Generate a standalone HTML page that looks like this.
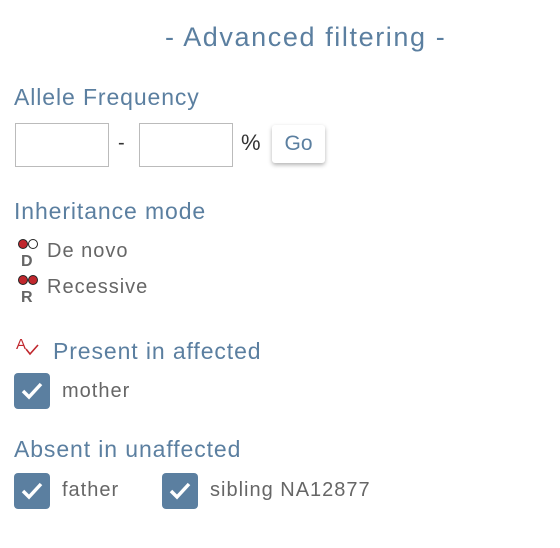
<!DOCTYPE html>
<html><head><style>
body{margin:0;width:560px;height:548px;background:#fff;font-family:"Liberation Sans",sans-serif;position:relative;overflow:hidden}
.a{position:absolute;white-space:nowrap}
.h{color:#5b7fa0;font-size:23px;letter-spacing:0.9px}
.t{color:#666;font-size:20px;letter-spacing:1px}
.in{position:absolute;border:1px solid #bbb;width:92px;height:42px;top:123px;background:#fff}
.cb{position:absolute;width:36px;height:36px;background:#5b7fa0;border-radius:4px}
.cb svg{position:absolute;left:6px;top:7px}
.ic{position:absolute;width:20px}
.dot{display:inline-block;width:10px;height:10px;border-radius:50%;background:#c0272d;border:1px solid #222;box-sizing:border-box}
</style></head><body>
<div class="a h" style="left:165px;top:22px;font-size:27px;letter-spacing:1.6px">- Advanced filtering -</div>
<div class="a h" style="left:14px;top:84px">Allele Frequency</div>
<div class="in" style="left:15px"></div>
<div class="a t" style="left:118px;top:132px;color:#333">-</div>
<div class="in" style="left:139px"></div>
<div class="a t" style="left:241px;top:130px;color:#333;font-size:22px">%</div>
<div class="a" style="left:272px;top:125px;width:53px;height:38px;border-radius:3px;box-shadow:0 2px 4px rgba(0,0,0,.3);color:#5b7fa0;font-size:21px;text-align:center;line-height:38px">Go</div>
<div class="a h" style="left:14px;top:198px">Inheritance mode</div>
<div class="ic" style="left:18px;top:236px"><span class="dot"></span><span class="dot" style="background:#fff"></span><div style="font-weight:bold;color:#666;font-size:16px;margin-left:3px;line-height:16px">D</div></div>
<div class="a t" style="left:47px;top:240px">De novo</div>
<div class="ic" style="left:18px;top:272px"><span class="dot"></span><span class="dot"></span><div style="font-weight:bold;color:#666;font-size:16px;margin-left:3px;line-height:16px">R</div></div>
<div class="a t" style="left:47px;top:276px">Recessive</div>
<svg class="a" style="left:16px;top:336px" width="26" height="22"><text x="0" y="13" font-size="15" fill="#c0272d" font-family="Liberation Sans">A</text><path d="M10 13 L14 18 L22 9" stroke="#c0272d" stroke-width="1.6" fill="none"/></svg>
<div class="a h" style="left:53px;top:338px">Present in affected</div>
<div class="cb" style="left:14px;top:373px"><svg width="24" height="22"><path d="M3 11 L9 17 L21 4" stroke="#fff" stroke-width="3.5" fill="none"/></svg></div>
<div class="a t" style="left:62px;top:380px">mother</div>
<div class="a h" style="left:14px;top:436px">Absent in unaffected</div>
<div class="cb" style="left:14px;top:473px"><svg width="24" height="22"><path d="M3 11 L9 17 L21 4" stroke="#fff" stroke-width="3.5" fill="none"/></svg></div>
<div class="a t" style="left:62px;top:479px">father</div>
<div class="cb" style="left:162px;top:473px"><svg width="24" height="22"><path d="M3 11 L9 17 L21 4" stroke="#fff" stroke-width="3.5" fill="none"/></svg></div>
<div class="a t" style="left:210px;top:479px">sibling NA12877</div>
</body></html>
